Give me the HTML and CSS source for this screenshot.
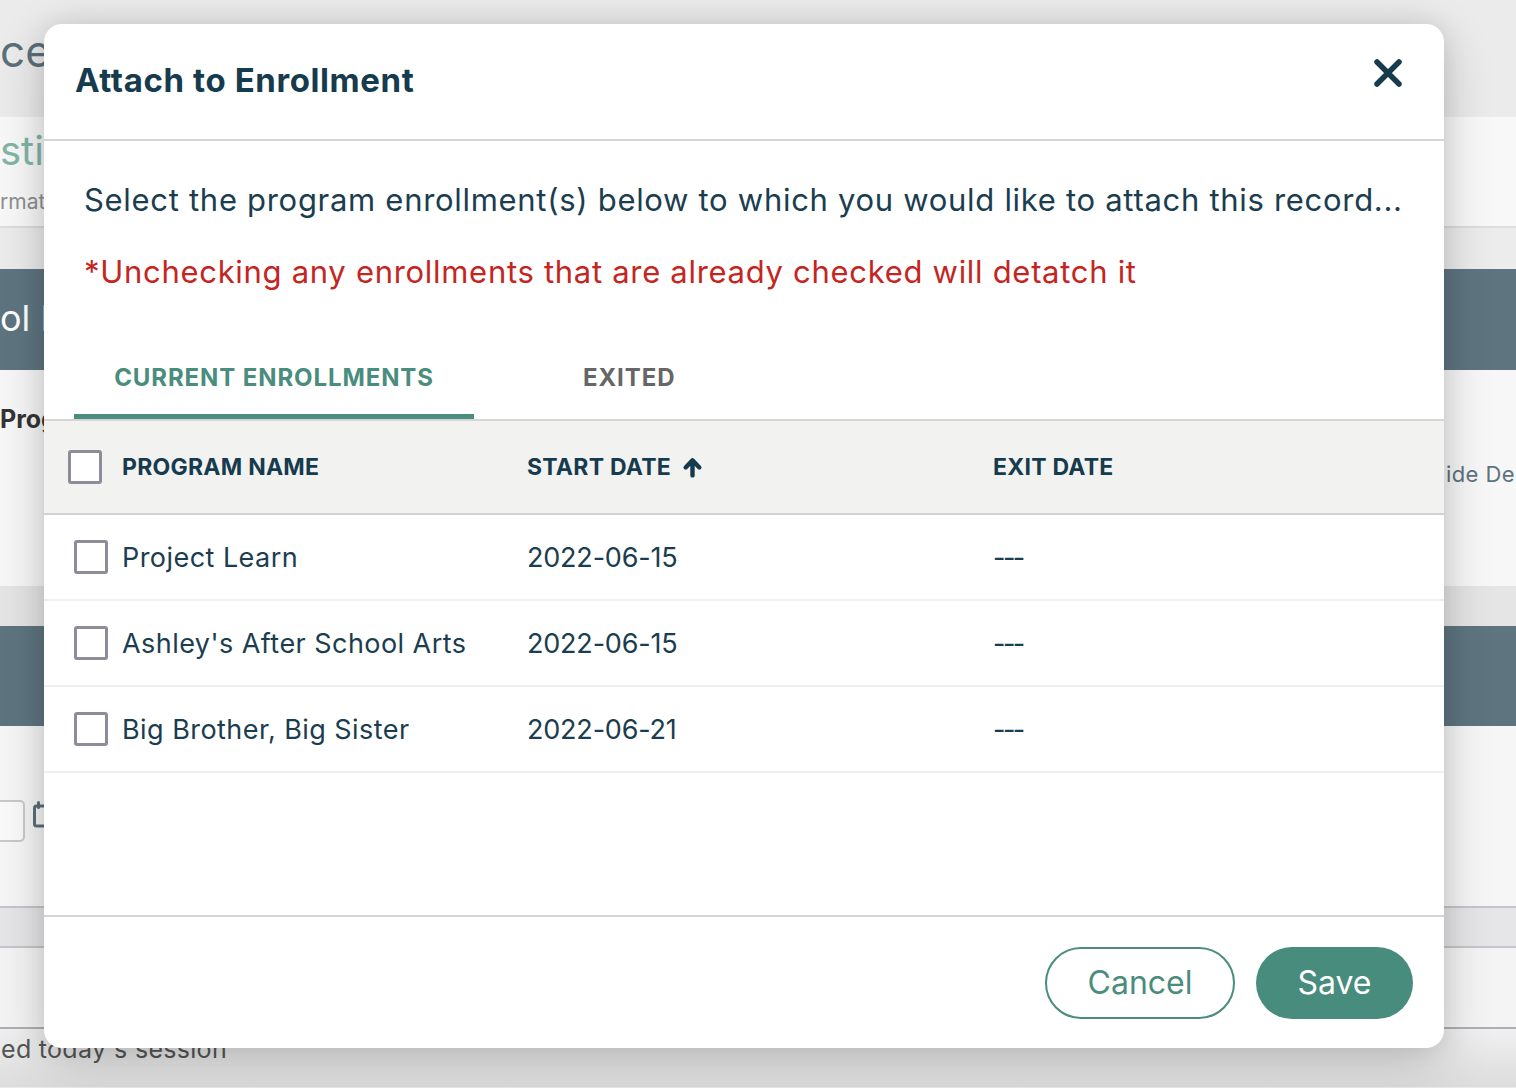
FILE: index.html
```html
<!DOCTYPE html>
<html lang="en">
<head>
<meta charset="utf-8">
<title>Attach to Enrollment</title>
<link rel="stylesheet" href="styles.css">
</head>
<body>
<div class="page">
  <div class="band band-top">
    <span class="page-title">ce</span>
  </div>
  <div class="band band-card">
    <span class="card-title">sti</span>
    <span class="card-sub">rmat</span>
  </div>
  <div class="band band-gap"></div>
  <div class="band band-slate">
    <span class="slate-title">ol P</span>
  </div>
  <div class="band band-white">
    <span class="section-label">Prog</span>
    <span class="side-label">ide De</span>
  </div>
  <div class="band band-gap2"></div>
  <div class="band band-slate"></div>
  <div class="band band-form">
    <div class="date-field">
      <span class="date-input"></span>
      <svg class="cal-icon" viewBox="0 0 12 28" width="12" height="28">
        <rect x="1.5" y="6" width="14" height="20" rx="2" fill="none" stroke="#5c7079" stroke-width="3"/>
        <rect x="4" y="1" width="3" height="8" rx="1.5" fill="#5c7079"/>
      </svg>
    </div>
  </div>
  <div class="band band-stripe"></div>
  <div class="band band-notes"></div>
  <div class="band band-foot">
    <span class="note-text">ed today's session</span>
  </div>
</div>

<div class="modal" role="dialog" aria-labelledby="modal-title">
  <header class="modal-head">
    <h1 id="modal-title">Attach to Enrollment</h1>
    <button class="close" aria-label="Close">
      <svg viewBox="0 0 28 28" width="28" height="28">
        <path d="M3 3 L25 25 M25 3 L3 25" stroke="#163b4e" stroke-width="5.5" stroke-linecap="round" fill="none"/>
      </svg>
    </button>
  </header>

  <div class="modal-body">
    <p class="lead">Select the program enrollment(s) below to which you would like to attach this record...</p>
    <p class="warn">*Unchecking any enrollments that are already checked will detatch it</p>

    <nav class="tabs">
      <span class="tab active">CURRENT ENROLLMENTS</span>
      <span class="tab">EXITED</span>
    </nav>

    <div class="grid">
      <div class="grid-row grid-head">
        <div class="cell cell-name"><span class="check check-head"></span>PROGRAM NAME</div>
        <div class="cell cell-start">START DATE
          <svg class="sort" viewBox="0 0 20 20" width="21" height="21">
            <path d="M10 17.5 V4 M3.5 10 L10 3.2 L16.5 10" stroke="#163b4e" stroke-width="4.2" stroke-linecap="round" stroke-linejoin="round" fill="none"/>
          </svg>
        </div>
        <div class="cell cell-exit">EXIT DATE</div>
      </div>
      <div class="grid-row">
        <div class="cell cell-name"><span class="check"></span>Project Learn</div>
        <div class="cell cell-start date">2022-06-15</div>
        <div class="cell cell-exit dash">---</div>
      </div>
      <div class="grid-row">
        <div class="cell cell-name"><span class="check"></span>Ashley's After School Arts</div>
        <div class="cell cell-start date">2022-06-15</div>
        <div class="cell cell-exit dash">---</div>
      </div>
      <div class="grid-row">
        <div class="cell cell-name"><span class="check"></span>Big Brother, Big Sister</div>
        <div class="cell cell-start date">2022-06-21</div>
        <div class="cell cell-exit dash">---</div>
      </div>
    </div>
  </div>

  <footer class="modal-foot">
    <button class="btn btn-outline">Cancel</button>
    <button class="btn btn-fill">Save</button>
  </footer>
</div>
</body>
</html>
```

FILE: styles.css
```css
* { box-sizing: border-box; }

html, body {
  margin: 0;
  padding: 0;
  width: 1516px;
  height: 1088px;
  overflow: hidden;
  background: #ececec;
  font-family: "Inter", "Lato", sans-serif;
}

/* ---------- page behind the dialog ---------- */
.page {
  width: 1516px;
  height: 1088px;
  display: flex;
  flex-direction: column;
  overflow: hidden;
}

.band {
  display: flex;
  justify-content: space-between;
  align-items: flex-start;
  flex: none;
  overflow: hidden;
}

.band-top {
  height: 117px;
  background: #ebebeb;
}
.page-title {
  font-size: 44px;
  line-height: 46px;
  color: #5b6f79;
  margin-top: 28px;
}

.band-card {
  height: 111px;
  background: #f8f8f8;
  border-bottom: 2px solid #dcdcdc;
  flex-direction: column;
  justify-content: flex-start;
}
.card-title {
  font-size: 40px;
  line-height: 44px;
  color: #80b5a6;
  margin-top: 12px;
}
.card-sub {
  font-size: 21px;
  line-height: 22px;
  color: #8e8e8e;
  margin-top: 18px;
}

.band-gap {
  height: 41px;
  background: #ececec;
}

.band-slate {
  height: 100px;
  background: #5e7580;
}
.slate-title {
  font-size: 36px;
  line-height: 38px;
  color: #ffffff;
  margin-top: 30px;
}

.band-white {
  height: 217px;
  background: #f7f7f7;
  border-top: 1px solid #5e7580;
  display: grid;
  grid-template-columns: 1446px 1fr;
}
.section-label {
  font-size: 25px;
  line-height: 26px;
  font-weight: 700;
  color: #343434;
  margin-top: 36px;
}
.side-label {
  font-size: 22px;
  line-height: 24px;
  color: #5d7380;
  margin-top: 92px;
  white-space: nowrap;
  letter-spacing: 0.4px;
}

.band-gap2 {
  height: 40px;
  background: #e5e5e5;
}

.band-form {
  height: 180px;
  background: #f6f6f6;
}
.date-field {
  display: flex;
  align-items: flex-start;
  margin-top: 74px;
  margin-left: -20px;
}
.date-input {
  width: 45px;
  height: 42px;
  border: 2px solid #c9c9cc;
  border-radius: 5px;
  background: #fafafa;
}
.cal-icon {
  margin-left: 8px;
}

.band-stripe {
  height: 42px;
  background: #e6e6e8;
  border-top: 2px solid #c6c6ca;
  border-bottom: 2px solid #c6c6ca;
}

.band-notes {
  height: 81px;
  background: #f4f4f4;
  border-bottom: 2px solid #aeaeb4;
}

.band-foot {
  height: 58px;
  background: linear-gradient(#f0f0f0, #dcdcdc);
}
.note-text {
  font-size: 25px;
  line-height: 28px;
  color: #555555;
  margin-top: 6px;
  margin-left: 1px;
  letter-spacing: 0.3px;
  white-space: nowrap;
}

/* ---------- dialog ---------- */
.modal {
  position: absolute;
  left: 44px;
  top: 24px;
  width: 1400px;
  height: 1024px;
  background: #ffffff;
  border-radius: 18px;
  box-shadow: 0 12px 50px rgba(0, 0, 0, 0.2), 0 0 24px rgba(0, 0, 0, 0.08);
  display: flex;
  flex-direction: column;
  overflow: hidden;
  color: #173b4f;
}

.modal-head {
  height: 117px;
  flex: none;
  display: flex;
  align-items: center;
  justify-content: space-between;
  padding: 0 42px 0 31px;
  border-bottom: 2px solid #d5d5d5;
}
.modal-head h1 {
  margin: 0;
  font-size: 33px;
  font-weight: 700;
  color: #163b4e;
  letter-spacing: 0.6px;
  padding-bottom: 4px;
}
.close {
  border: 0;
  background: none;
  padding: 0;
  width: 28px;
  height: 28px;
  margin-bottom: 18px;
  display: flex;
}

.modal-body {
  flex: 1;
  display: flex;
  flex-direction: column;
  border-bottom: 2px solid #d5d5d5;
}

.lead {
  margin: 39px 40px 0;
  font-size: 31px;
  line-height: 40px;
  letter-spacing: 0.7px;
  color: #1b3d50;
  white-space: nowrap;
}
.warn {
  margin: 32px 40px 0;
  font-size: 31px;
  line-height: 40px;
  letter-spacing: 0.7px;
  color: #c4261f;
  white-space: nowrap;
}

.tabs {
  display: flex;
  margin-top: 46px;
  padding-left: 30px;
  border-bottom: 2px solid #d5d5d5;
}
.tab {
  font-size: 24px;
  line-height: 28px;
  font-weight: 700;
  letter-spacing: 0.9px;
  padding: 26px 40px 22px;
  color: #666666;
  border-bottom: 5px solid transparent;
  white-space: nowrap;
}
.tab.active {
  width: 400px;
  padding-left: 0;
  padding-right: 0;
  text-align: center;
  color: #4a8c7d;
  border-bottom-color: #4a8c7d;
}
.tab + .tab {
  margin-left: 69px;
}

.grid-row {
  display: grid;
  grid-template-columns: 483px 466px 1fr;
  height: 86px;
  align-items: center;
  border-bottom: 2px solid #efefef;
}
.grid-head {
  height: 94px;
  background: #f2f2f1;
  border-bottom: 2px solid #d2d2d2;
}

.cell {
  display: flex;
  align-items: center;
  font-size: 27px;
  letter-spacing: 0.45px;
  color: #1b3d50;
  white-space: nowrap;
}
.grid-head .cell {
  font-size: 23px;
  font-weight: 700;
  letter-spacing: 0.25px;
  color: #163b4e;
}
.cell.date {
  letter-spacing: -0.2px;
}
.cell.dash {
  letter-spacing: -2.5px;
}
.cell-name {
  padding-left: 30px;
}
.grid-head .cell-name {
  padding-left: 24px;
}

.check {
  width: 34px;
  height: 34px;
  flex: none;
  border: 3px solid #8f8b99;
  border-radius: 3px;
  background: #ffffff;
  margin-right: 14px;
}
.check-head {
  margin-right: 20px;
}

.sort {
  margin-left: 11px;
}

.modal-foot {
  height: 131px;
  flex: none;
  display: flex;
  align-items: center;
  justify-content: flex-end;
  gap: 21px;
  padding-right: 31px;
}
.btn {
  height: 72px;
  border-radius: 36px;
  font-family: inherit;
  font-size: 32px;
  padding: 0;
}
.btn-outline {
  width: 190px;
  background: #ffffff;
  color: #4a8c7d;
  border: 2px solid #4a8c7d;
}
.btn-fill {
  width: 157px;
  background: #478c7c;
  color: #ffffff;
  border: 0;
}
```
